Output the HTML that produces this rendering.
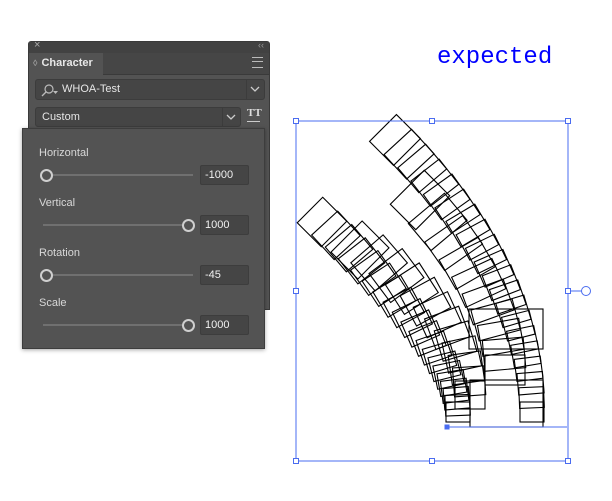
<!DOCTYPE html>
<html><head><style>
body{margin:0;width:612px;height:501px;background:#fff;position:relative;overflow:hidden;font-family:"Liberation Sans",sans-serif}
.a{position:absolute}
.panel{left:28px;top:41px;width:242px;height:269px;background:#535353;border:1px solid #3a3a3a;box-sizing:border-box;border-radius:3px 3px 0 0}
.tb{left:0;top:0;width:240px;height:11px;background:#424242}
.tabbar{left:0;top:11px;width:240px;height:21px;background:#464646;border-bottom:1px solid #3a3a3a}
.tab{left:0;top:11px;width:74px;height:22px;background:#535353;color:#e8e8e8;font-weight:bold;font-size:11px;line-height:21px}
.field{background:#454545;border:1px solid #3c3c3c;border-radius:3px;color:#e6e6e6;font-size:11px;box-sizing:border-box}
.pop{left:22px;top:128px;width:243px;height:221px;background:#535353;border:1px solid #3d3d3d;box-sizing:border-box;box-shadow:0 1px 4px rgba(0,0,0,.35)}
.lbl{color:#d8d8d8;font-size:11px;left:16px}
.track{height:2px;background:#707070;left:20px;width:150px}
.thumb{width:9px;height:9px;border:2px solid #cfcfcf;border-radius:50%;background:#535353}
.inp{left:177px;width:49px;height:20px;background:#454545;border:1px solid #3d3d3d;border-radius:2px;color:#f0f0f0;font-size:11px;line-height:18px;padding-left:4px;box-sizing:border-box}
.exp{left:437px;top:44px;color:#0000ff;font-family:"Liberation Mono",monospace;font-size:24px}
</style></head><body>
<div class="a exp">expected</div>
<div class="a panel">
 <div class="a tb"><span class="a" style="left:5px;top:-3px;color:#aaa;font-size:11px">×</span><span class="a" style="right:5px;top:-2px;color:#999;font-size:9px">‹‹</span></div>
 <div class="a tabbar"><span class="a" style="right:6px;top:4px;width:11px;height:9px;border-top:1px solid #bbb;border-bottom:1px solid #bbb"></span><span class="a" style="right:6px;top:8px;width:11px;height:1px;background:#bbb"></span></div>
 <div class="a tab"><span style="color:#999;font-size:9px;padding:0 4px 0 4px">◊</span>Character</div>
 <div class="a field" style="left:6px;top:37px;width:230px;height:21px">
  <svg class="a" style="left:4px;top:4px" width="20" height="13"><circle cx="9" cy="5" r="4" fill="none" stroke="#bbb" stroke-width="1.2"/><line x1="6" y1="8" x2="2" y2="12" stroke="#bbb" stroke-width="1.3"/><path d="M13 7h5l-2.5 3z" fill="#bbb"/></svg>
  <span class="a" style="left:26px;top:3px;font-size:11px">WHOA-Test</span>
  <span class="a" style="left:210px;top:0;width:1px;height:19px;background:#3c3c3c"></span>
  <svg class="a" style="left:214px;top:6px" width="10" height="7"><path d="M1 1l4 4 4-4" fill="none" stroke="#ccc" stroke-width="1.3"/></svg>
 </div>
 <div class="a field" style="left:6px;top:65px;width:206px;height:20px">
  <span class="a" style="left:6px;top:3px;font-size:11px">Custom</span>
  <span class="a" style="left:186px;top:0;width:1px;height:18px;background:#3c3c3c"></span>
  <svg class="a" style="left:190px;top:6px" width="10" height="7"><path d="M1 1l4 4 4-4" fill="none" stroke="#ccc" stroke-width="1.3"/></svg>
 </div>
 <div class="a" style="left:218px;top:65px;color:#ddd;font-size:11px;font-weight:bold;font-family:'Liberation Serif',serif">TT</div>
 <div class="a" style="left:218px;top:79px;width:13px;height:1px;background:#ccc"></div>
</div>
<div class="a pop">
 <div class="a lbl" style="top:18px">Horizontal</div>
 <div class="a track" style="top:45px"></div><div class="a thumb" style="left:17px;top:40px"></div>
 <div class="a inp" style="top:36px">-1000</div>
 <div class="a lbl" style="top:68px">Vertical</div>
 <div class="a track" style="top:95px"></div><div class="a thumb" style="left:159px;top:90px"></div>
 <div class="a inp" style="top:86px">1000</div>
 <div class="a lbl" style="top:118px">Rotation</div>
 <div class="a track" style="top:145px"></div><div class="a thumb" style="left:17px;top:140px"></div>
 <div class="a inp" style="top:136px">-45</div>
 <div class="a lbl" style="top:168px">Scale</div>
 <div class="a track" style="top:195px"></div><div class="a thumb" style="left:159px;top:190px"></div>
 <div class="a inp" style="top:186px">1000</div>
</div>
<svg class="a" style="left:0;top:0" width="612" height="501" id="s">
 <g id="g" fill="none" stroke="#000" stroke-width="1.1"></g>
 <g fill="none" stroke="#4a6cf0" stroke-width="1">
  <rect x="296" y="121" width="272" height="340"/>
  <line x1="447" y1="427" x2="567" y2="427"/>
  <line x1="568" y1="291" x2="582" y2="291"/>
  <circle cx="586" cy="291" r="4.5" fill="#fff"/>
  <g fill="#fff">
   <rect x="293.5" y="118.5" width="5" height="5"/><rect x="429.5" y="118.5" width="5" height="5"/><rect x="565.5" y="118.5" width="5" height="5"/>
   <rect x="293.5" y="288.5" width="5" height="5"/><rect x="565.5" y="288.5" width="5" height="5"/>
   <rect x="293.5" y="458.5" width="5" height="5"/><rect x="429.5" y="458.5" width="5" height="5"/><rect x="565.5" y="458.5" width="5" height="5"/>
  </g>
  <rect x="445" y="425" width="4" height="4" fill="#4a6cf0"/>
 </g>
</svg>
<script>
var g=document.getElementById('g'),h='';
function leg(x0,y0,cx,cy,x1,y1,n,w0,w1,h0,h1){
 for(var i=0;i<n;i++){var t=i/(n-1),u=1-t;
  var x=u*u*x0+2*u*t*cx+t*t*x1,y=u*u*y0+2*u*t*cy+t*t*y1;
  var a=-45*t,w=w0+(w1-w0)*t,hh=h0+(h1-h0)*t;
  h+='<rect x="'+(-w/2).toFixed(1)+'" y="'+(-hh/2).toFixed(1)+'" width="'+w.toFixed(1)+'" height="'+hh.toFixed(1)+'" transform="translate('+x.toFixed(1)+','+y.toFixed(1)+') rotate('+a.toFixed(1)+')"/>';
 }}
leg(458,412,458,350,322,222,20,24,36,20,34);
leg(532,412,532,275,395,140,20,24,38,20,34);
leg(470,395,470,320,360,250,12,30,44,28,38);
leg(505,370,505,300,420,200,10,40,48,30,36);
h+='<rect x="470" y="380" width="73" height="47"/><rect x="469" y="309" width="74" height="40"/>';
g.innerHTML=h;
</script>
</body></html>
